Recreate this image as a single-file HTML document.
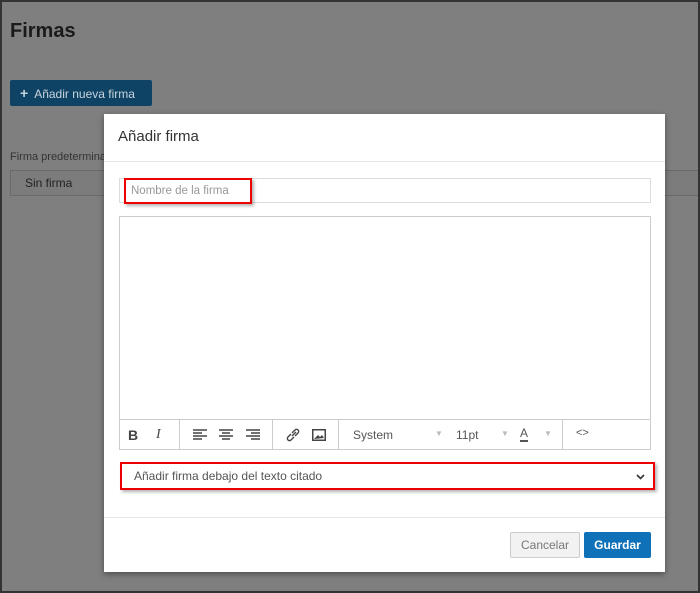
<!DOCTYPE html>
<html><head><style>
*{box-sizing:border-box}
body{margin:0;width:700px;height:593px;overflow:hidden;font-family:"Liberation Sans",sans-serif;background:#7f7f7f;position:relative}
.frame{position:absolute;left:0;top:0;width:700px;height:593px;border:2px solid #333}
.a{position:absolute}
</style></head><body>
<div class="a" style="left:10px;top:20px;font-size:20px;font-weight:bold;color:#1a1a1a">Firmas</div>
<div class="a" style="left:10px;top:80px;width:142px;height:26px;background:#0f4365;border-radius:2px;color:#c8d4dc;font-size:12px;line-height:26px;padding-left:10px"><b style="font-size:14px">+</b>&nbsp; Añadir nueva firma</div>
<div class="a" style="left:10px;top:151px;font-size:11px;color:#333">Firma predetermina</div>
<div class="a" style="left:10px;top:170px;width:690px;height:26px;border:1px solid #6a6a6a;background:#7c7c7c;font-size:12px;color:#222;line-height:24px;padding-left:14px">Sin firma</div>

<div class="a" style="left:104px;top:114px;width:561px;height:458px;background:#fff;box-shadow:0 2px 6px rgba(0,0,0,.4)">
 <div class="a" style="left:14px;top:14px;font-size:15px;color:#333">Añadir firma</div>
 <div class="a" style="left:0;top:47px;width:561px;border-top:1px solid #e5e5e5"></div>
 <div class="a" style="left:15px;top:64px;width:532px;height:25px;border:1px solid #ddd"></div>
 <div class="a" style="left:20px;top:64px;width:128px;height:26px;border:2px solid #e00;box-shadow:2px 2px 3px rgba(0,0,0,.3);font-size:11.5px;color:#999;line-height:22px;padding-left:5px">Nombre de la firma</div>
 <div class="a" style="left:15px;top:102px;width:532px;height:234px;border:1px solid #ccc"></div>
 <div class="a" style="left:16px;top:305px;width:530px;height:30px;border-top:1px solid #ccc;font-size:12px;color:#444">
  <span class="a" style="left:8px;top:7px;font-weight:bold;font-size:14px">B</span>
  <span class="a" style="left:36px;top:7px;font-style:italic;font-size:14px;font-family:'Liberation Serif',serif">I</span>
  <div class="a" style="left:59px;top:0;height:30px;border-left:1px solid #ccc"></div>
  <svg class="a" style="left:73px;top:9px" width="14" height="12"><path d="M0 1h14M0 4h9M0 7h14M0 10h9" stroke="#444" stroke-width="1.5"/></svg>
  <svg class="a" style="left:99px;top:9px" width="14" height="12"><path d="M0 1h14M3 4h8M0 7h14M3 10h8" stroke="#444" stroke-width="1.5"/></svg>
  <svg class="a" style="left:126px;top:9px" width="14" height="12"><path d="M0 1h14M5 4h9M0 7h14M5 10h9" stroke="#444" stroke-width="1.5"/></svg>
  <div class="a" style="left:152px;top:0;height:30px;border-left:1px solid #ccc"></div>
  <svg class="a" style="left:166px;top:8px" width="14" height="14"><path d="M6 8l4-4M5 6l-3 3a2 2 0 0 0 3 3l3-3M9 8l3-3a2 2 0 0 0-3-3L6 5" stroke="#444" stroke-width="1.4" fill="none"/></svg>
  <svg class="a" style="left:192px;top:9px" width="14" height="12"><rect x="0.75" y="0.75" width="12.5" height="10.5" stroke="#444" stroke-width="1.5" fill="none"/><path d="M2 10l4-4 2 2 2-2 2 3z" fill="#444"/></svg>
  <div class="a" style="left:218px;top:0;height:30px;border-left:1px solid #ccc"></div>
  <span class="a" style="left:233px;top:8px;color:#555">System</span>
  <span class="a" style="left:315px;top:9px;color:#bbb;font-size:8px">▼</span>
  <span class="a" style="left:336px;top:8px;color:#555">11pt</span>
  <span class="a" style="left:381px;top:9px;color:#bbb;font-size:8px">▼</span>
  <span class="a" style="left:400px;top:7px;color:#555;border-bottom:2px solid #555;line-height:13px">A</span>
  <span class="a" style="left:424px;top:9px;color:#bbb;font-size:8px">▼</span>
  <div class="a" style="left:442px;top:0;height:30px;border-left:1px solid #ccc"></div>
  <span class="a" style="left:456px;top:7px;color:#555;font-size:11px">&lt;&gt;</span>
 </div>
 <div class="a" style="left:16px;top:348px;width:535px;height:28px;border:2px solid #e00;box-shadow:2px 2px 3px rgba(0,0,0,.3);font-size:12px;color:#555;line-height:24px;padding-left:12px">Añadir firma debajo del texto citado<svg style="position:absolute;right:8px;top:10px" width="9" height="6"><path d="M1 1l3.5 3.5L8 1" stroke="#333" stroke-width="1.6" fill="none"/></svg></div>
 <div class="a" style="left:0;top:403px;width:561px;border-top:1px solid #e5e5e5"></div>
 <div class="a" style="left:406px;top:418px;width:70px;height:26px;border:1px solid #ccc;background:#f2f2f2;border-radius:2px;font-size:12px;color:#777;text-align:center;line-height:24px">Cancelar</div>
 <div class="a" style="left:480px;top:418px;width:67px;height:26px;background:#0f72b9;border-radius:2px;font-size:12px;color:#fff;text-align:center;line-height:26px;font-weight:bold">Guardar</div>
</div>
<div class="frame"></div>
</body></html>
